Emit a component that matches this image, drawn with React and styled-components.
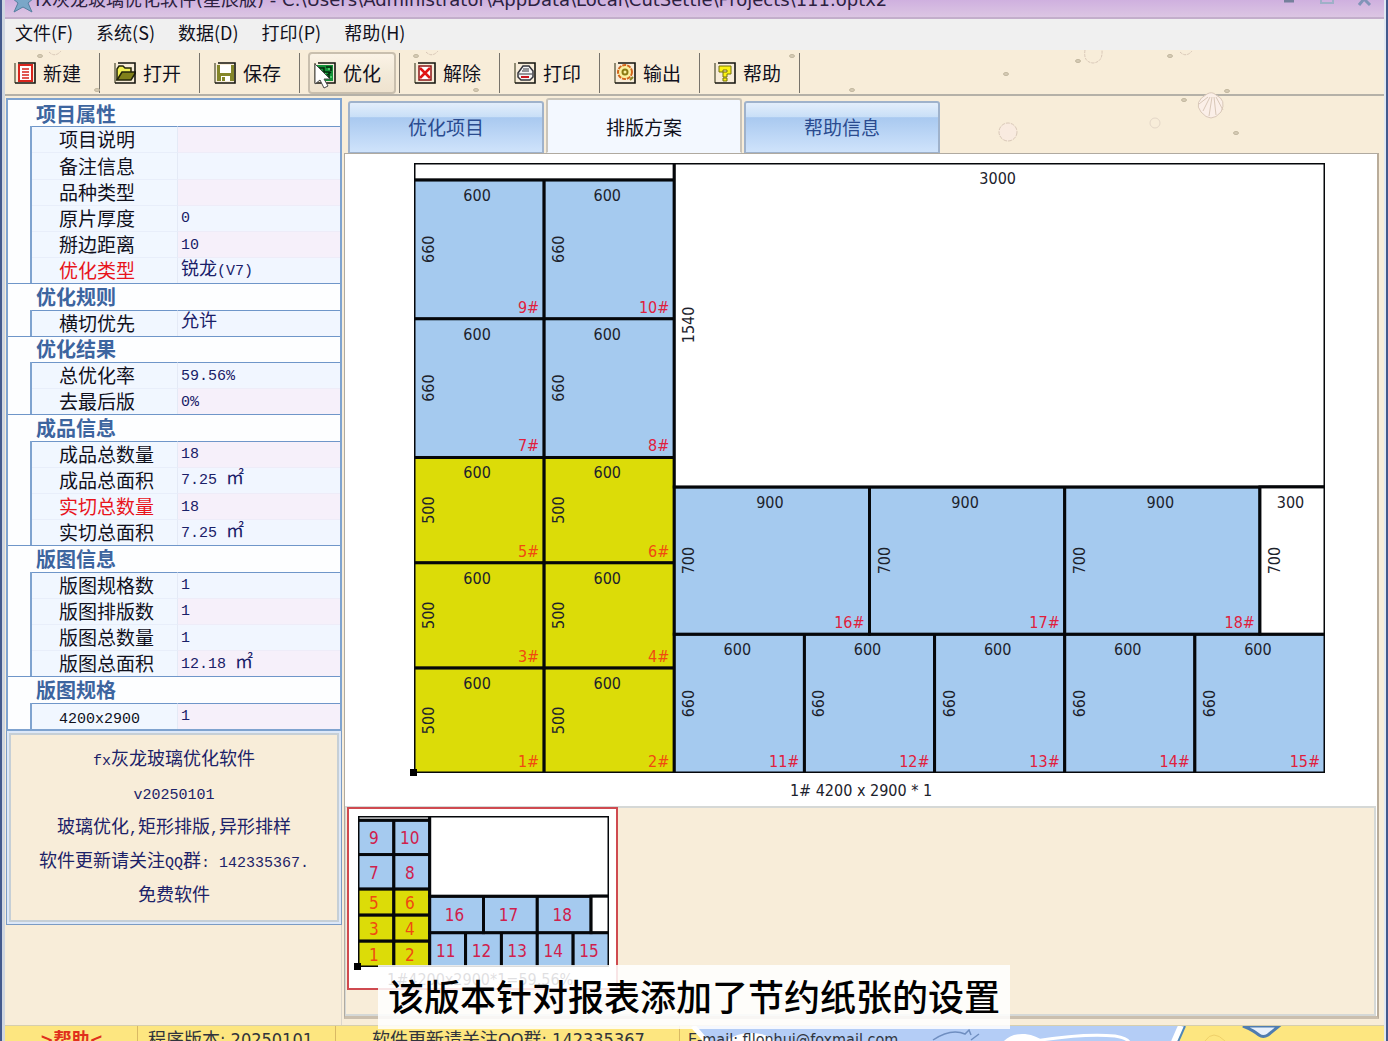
import React, { useState } from "react"
import styled, { createGlobalStyle, css } from "styled-components"

const tahoma = `"DejaVu Sans Condensed", "DejaVu Sans", "Noto Sans CJK SC", sans-serif`
const verdana = `"DejaVu Sans", "Noto Sans CJK SC", sans-serif`
const mono = `"Liberation Mono", "Noto Sans CJK SC", monospace`

const GlobalStyle = createGlobalStyle`
	* { box-sizing: border-box; }

	body {
		margin: 0;
		overflow: hidden;
		font-family: "Noto Sans CJK SC", sans-serif;
		font-size: 18px;
		color: #10101c;
	}

	button { font: inherit; color: inherit; }
`

const Window = styled.div`
	position: relative;
	display: flex;
	flex-direction: column;
	height: 100vh;
	background: #f8edd9;
	border-left: 2px solid #43598c;
	border-right: 2px solid #43598c;
`

const Frame = styled.div`
	display: flex;
	flex-direction: column;
	flex: 1;
	min-height: 0;
	border-left: 3px solid #cfd6e0;
	border-right: 2px solid #dfe7f2;
`

const TitleBar = styled.header`
	display: flex;
	align-items: flex-end;
	flex: none;
	height: 19px;
	padding: 0 8px 0 6px;
	overflow: hidden;
	background: linear-gradient(#cfb0df, #dcc6e3);
	border-bottom: 2px solid #c3aecb;

	svg { flex: none; }
`

const Title = styled.h1`
	flex: 1;
	margin: 0 0 7px;
	font-family: ${verdana};
	font-size: 18px;
	font-weight: 400;
	line-height: 20px;
	white-space: nowrap;
	color: #2c2140;
`

const MenuBar = styled.nav`
	display: flex;
	align-items: flex-start;
	flex: none;
	gap: 23px;
	height: 31px;
	padding-left: 10px;
	background: #f0f0f0;

	button {
		padding: 0;
		border: 0;
		background: none;
		line-height: 26px;
	}
`

const ToolBar = styled.div`
	display: flex;
	flex: none;
	height: 46px;
	border-bottom: 2px solid #b5b1a8;
`

const Tool = styled.div`
	display: flex;
	width: 100px;
	margin: 3px 0 1px;
	border-right: 1px solid #77736b;

	&:first-child { width: 95px; }
	&:first-child button { margin-left: 3px; }
`

const ToolButton = styled.button`
	display: flex;
	align-items: center;
	flex: 1;
	gap: 7px;
	margin: -1px 3px -1px 8px;
	padding: 0 0 0 5px;
	border: 1px solid transparent;
	border-radius: 4px;
	background: none;
	font-size: 19px;
	line-height: 24px;
	white-space: nowrap;

	${({ $hot }) => $hot && css`
		border: 2px solid #c9bfae;
		padding-left: 4px;
		background: linear-gradient(#fbf3e6, #f3ead9 50%, #efe3cf);
	`}
`

const Body = styled.div`
	display: flex;
	flex: 1;
	min-height: 0;
	padding-top: 2px;
`

const Sidebar = styled.aside`
	flex: none;
	width: 337px;
	border-right: 1px solid #dcd6cb;
`

const Properties = styled.table`
	width: 336px;
	height: 633px;
	margin-left: 1px;
	border: 2px solid #7fa3cf;
	border-spacing: 0;
	background: #fdfeff;
	table-layout: fixed;

	th, td {
		height: 26px;
		padding: 0 0 1px;
		line-height: 22px;
		text-align: left;
		font-weight: 400;
		white-space: nowrap;
	}

	tr:nth-child(even) td:last-child { background: #f6f0fa; }
`

const GroupHead = styled.th`
	&& {
		padding: 0 0 0 28px;
		font-size: 20px;
		font-weight: 700;
		color: #3d659f;
		border-top: 1px solid ${({ $first }) => ($first ? "transparent" : "#6f96c9")};
	}
`

const Gutter = styled.td`
	width: 24px;
	border-right: 2px solid #7fa3cf;
`

const Label = styled.th`
	width: 146px;
	background: #f1f7ff;
	border-right: 1px solid #e4eaf6;
	border-top: 1px solid ${({ $top }) => ($top ? "#6f96c9" : "#e8eefa")};
	font-size: 19px;
	color: ${({ $alert }) => ($alert ? "#e8141c" : "#10101c")};

	&& { padding-left: 27px; }
`

const Value = styled.td`
	background: #f1f6ff;
	border-top: 1px solid ${({ $top }) => ($top ? "#6f96c9" : "#eeecf8")};
	font-family: ${mono};
	font-size: 15px;
	color: #1a2068;

	&& { padding: 2px 0 0 3px; }
`

const Wide = styled.span`
	font-size: 18px;
	line-height: 1;
`

const Small = styled.span`
	font-family: ${mono};
	font-size: 15px;
	line-height: 1;
`

const About = styled.section`
	width: 336px;
	margin-left: 1px;
	padding: 2px;
	border: 1px solid #7b9bc4;
	border-top: 0;
	background: #dde8f8;

	div {
		padding: 5px 0 10px;
		border: 2px solid #c6cfd6;
		background: #f8edd9;
		text-align: center;
		color: #1c2268;
	}

	p {
		margin: 0;
		line-height: 34px;
		white-space: nowrap;
	}
`

const Main = styled.main`
	display: flex;
	flex-direction: column;
	flex: 1;
	min-width: 0;
	padding: 0 5px 0 2px;
`

const Tabs = styled.div`
	display: flex;
	align-items: flex-end;
	flex: none;
	gap: 2px;
	height: 55px;
	padding-left: 4px;
`

const Tab = styled.button`
	width: 196px;
	height: 52px;
	padding: 0 0 2px;
	border: 2px solid #9fb2cb;
	border-bottom-width: 1px;
	border-radius: 3px 3px 0 0;
	background: linear-gradient(#e3eefb, #c9dff7 28%, #a9c9f0 30%, #cfe3fb);
	font-size: 19px;
	color: #2a4b8f;

	${({ $active }) => $active && css`
		height: 55px;
		padding: 0;
		border-color: #c9c4ba;
		border-bottom-color: #f3f8ff;
		background: #f3f8ff;
		color: #10101c;
	`}
`

const Panel = styled.section`
	display: flex;
	flex-direction: column;
	flex: 1;
	min-height: 0;
	margin-bottom: 6px;
	border: 1px solid #b0aaa0;
	border-right: 2px solid #b9ac9a;
	border-bottom: 3px solid #cbbfae;
	background: #fff;
`

const Plan = styled.div`
	flex: 1;
	min-height: 0;

	svg {
		display: block;
		width: 100%;
		height: 100%;
	}
`

const Tray = styled.div`
	flex: none;
	height: 210px;
	margin-right: 1px;
	border: 2px solid #d5d8d6;
	border-left-width: 1px;
	background: #f8edd9;
`

const Thumb = styled.button`
	display: block;
	width: 271px;
	height: 183px;
	margin: -1px 0 0 1px;
	padding: 0;
	border: 2px solid #cf4a50;
	background: #fff;
`

const StatusBar = styled.footer`
	position: relative;
	display: flex;
	flex: none;
	height: 16px;
	overflow: hidden;
	border-top: 1px solid #d6cfae;
	background: #fde680;
	font-family: ${tahoma};

	svg {
		position: absolute;
		left: 680px;
		top: 0;
	}
`

const Cell = styled.div`
	position: relative;
	flex: none;
	width: ${({ $w }) => $w}px;
	padding-left: ${({ $pad }) => $pad || 10}px;
	border-right: 1px solid #d9b964;
	font-size: ${({ $latin }) => ($latin ? 16 : 18)}px;
	line-height: 28px;
	white-space: nowrap;
	color: #30343c;

	&:last-of-type { border: 0; }

	a {
		color: #e0301c;
		font-weight: 700;
		text-decoration: none;
	}
`

const Subtitle = styled.div`
	position: absolute;
	left: 0;
	right: 0;
	bottom: 12px;
	display: flex;
	justify-content: center;
	pointer-events: none;

	span {
		padding: 0 10px 4px;
		background: rgba(255, 255, 255, 0.86);
		color: #000;
		font-size: 36px;
		font-weight: 500;
		line-height: 60px;
		white-space: nowrap;
	}
`

const Pointer = styled.svg`
	position: absolute;
	left: 309px;
	top: 63px;
`

const Shells = styled.svg`
	position: absolute;
	left: 0;
	top: 50px;
	pointer-events: none;
`

const groups = [
	["项目属性", [["项目说明", ""], ["备注信息", ""], ["品种类型", ""], ["原片厚度", "0"], ["掰边距离", "10"], ["优化类型", <><Wide>锐龙</Wide>(V7)</>, true]]],
	["优化规则", [["横切优先", <Wide>允许</Wide>]]],
	["优化结果", [["总优化率", "59.56%"], ["去最后版", "0%"]]],
	["成品信息", [["成品总数量", "18"], ["成品总面积", <>7.25 <Wide>㎡</Wide></>], ["实切总数量", "18", true], ["实切总面积", <>7.25 <Wide>㎡</Wide></>]]],
	["版图信息", [["版图规格数", "1"], ["版图排版数", "1"], ["版图总数量", "1"], ["版图总面积", <>12.18 <Wide>㎡</Wide></>]]],
	["版图规格", [[<Small>4200x2900</Small>, "1"]]],
]

// sheet and pieces in mm, origin at the bottom left corner
const SHEET = { w: 4200, h: 2900 }

const pieces = [
	[1, 0, 0, 600, 500], [2, 600, 0, 600, 500],
	[3, 0, 500, 600, 500], [4, 600, 500, 600, 500],
	[5, 0, 1000, 600, 500], [6, 600, 1000, 600, 500],
	[7, 0, 1500, 600, 660], [8, 600, 1500, 600, 660],
	[9, 0, 2160, 600, 660], [10, 600, 2160, 600, 660],
	[11, 1200, 0, 600, 660], [12, 1800, 0, 600, 660], [13, 2400, 0, 600, 660],
	[14, 3000, 0, 600, 660], [15, 3600, 0, 600, 660],
	[16, 1200, 660, 900, 700], [17, 2100, 660, 900, 700], [18, 3000, 660, 900, 700],
	[null, 0, 2820, 1200, 80], [null, 1200, 1360, 3000, 1540], [null, 3900, 660, 300, 700],
]

const Sheet = ({ id, x, y, width, height, detailed }) => {
	const sx = width / SHEET.w,
		sy = height / SHEET.h

	return (
		<g transform={`translate(${x} ${y})`} fontFamily={tahoma} fontSize={detailed ? 16 : 17} fill="#1c222c">
			<clipPath id={id}><rect width={width} height={height} /></clipPath>
			<g clipPath={`url(#${id})`}>
				{pieces.map(([n, px, py, w, h]) => {
					const left = px * sx,
						top = height - (py + h) * sy,
						pw = w * sx,
						ph = h * sy,
						fill = !n ? "#fff" : h === 500 ? "#dcdc08" : "#a5caef"

					return (
						<g key={`${px}-${py}`}>
							<rect x={left} y={top} width={pw} height={ph} fill={fill} stroke="#05070a" strokeWidth="3" />
							{detailed && ph > 30 && <>
								<text x={left + pw / 2 - 2} y={top + 21} textAnchor="middle">{w}</text>
								<text transform={`translate(${left + 20} ${top + ph / 2}) rotate(-90)`} textAnchor="middle">{h}</text>
								{n && <text x={left + pw - 5} y={top + ph - 6} textAnchor="end" fill={h === 500 ? "#f04a10" : "#e0203c"}>{n}#</text>}
							</>}
							{!detailed && n && <text x={left + pw / 2 - 2} y={top + ph / 2 + 7} textAnchor="middle" fill={h === 500 ? "#f04a10" : "#d0204c"}>{n}</text>}
						</g>
					)
				})}
			</g>
			<rect x={-4} y={height - 4} width={7} height={7} fill="#000" />
		</g>
	)
}

const art = {
	new: <>
		<rect x="5" y="3" width="13" height="16" fill="#fff" stroke="#d8251c" strokeWidth="2" />
		<path d="M8 7h7M8 10h7M8 13h7M8 16h7" stroke="#d8251c" strokeWidth="1.5" />
	</>,
	open: <>
		<path d="M3 18V7l2-3h4l2 2h6v4" fill="#f2f056" stroke="#23240a" strokeWidth="1.5" />
		<path d="M3 18l5-8h14l-5 8z" fill="#80801a" stroke="#23240a" strokeWidth="1.5" />
	</>,
	save: <>
		<path d="M3 3h17v16H3z" fill="#84862a" />
		<path d="M6 3h11v8H6zM7 14h9v5H7z" fill="#fff" />
		<path d="M8 15h3v4H8z" fill="#84862a" />
	</>,
	optimize: <>
		<rect x="2" y="3" width="17" height="16" fill="#14923a" />
		<path d="M4 6h6v4h5v6M12 5h5v4M6 14h4v3M13 13l4-3" stroke="#04280c" strokeWidth="1.5" fill="none" />
		<path d="M5 8h2M14 7h2M9 12h3M16 15h2" stroke="#58e078" strokeWidth="1.5" />
	</>,
	remove: <>
		<rect x="5" y="4" width="12" height="14" fill="#fff" stroke="#8b1616" strokeWidth="1.5" />
		<path d="M6 6l10 10M16 6L6 16" stroke="#e01414" strokeWidth="2.5" />
	</>,
	print: <>
		<path d="M4 11l5-7h6l4 5v6l-3 3H7l-3-3z" fill="#f6f6f6" stroke="#33343c" strokeWidth="1.5" />
		<path d="M9 7h6M8 9h7M5 12h13" stroke="#33343c" strokeWidth="1.2" />
		<path d="M7 15h8" stroke="#c81820" strokeWidth="2" />
	</>,
	output: <>
		<circle cx="11" cy="10" r="7" fill="#faf0a0" stroke="#d2661c" strokeWidth="2" strokeDasharray="4 1" />
		<circle cx="11" cy="10" r="2.5" fill="none" stroke="#8a7a14" strokeWidth="2" />
		<path d="M16 18l3-3" stroke="#8a8420" strokeWidth="2" />
	</>,
	help: <>
		<path d="M5 4h12v8h-4v3H9v-5h4V8H9v2H5zM9 16h4v3H9z" fill="#fbf312" stroke="#77720c" />
	</>,
}

const Icon = ({ name }) => (
	<svg width="22" height="22" viewBox="0 0 22 22" aria-hidden="true">
		<path d="M1 1v20" stroke="#6e6a50" strokeWidth="1.5" />
		{art[name]}
		<path d="M4 1h17v20H1" fill="none" stroke="#14140f" strokeWidth="1.6" />
	</svg>
)

const tools = [["new", "新建"], ["open", "打开"], ["save", "保存"], ["optimize", "优化"], ["remove", "解除"], ["print", "打印"], ["output", "输出"], ["help", "帮助"]]
const menus = ["文件(F)", "系统(S)", "数据(D)", "打印(P)", "帮助(H)"]
const tabs = ["优化项目", "排版方案", "帮助信息"]

const pebbles = [[38, 6], [95, 40], [414, 6], [474, 40], [790, 6], [850, 40], [1004, 24], [1076, 11], [1168, 6], [1225, 41], [1182, 50], [1234, 83]]

const SandShells = () => (
	<Shells width="1380" height="104" viewBox="0 0 1380 104" fill="none" stroke="#d9c8b8" aria-hidden="true">
		{pebbles.map(([x, y]) => <ellipse key={`${x}-${y}`} cx={x} cy={y} rx="2.5" ry="1.5" fill="#d6ccb6" stroke="#c2b79f" />)}
		<path d="M1083 0q-2 12 8 13q10-1 9-13" strokeDasharray="3 1" />
		<circle cx="1153" cy="73" r="5" stroke="#e4d7c8" />
		<circle cx="1006" cy="82" r="9" fill="#f9ebe0" strokeDasharray="4 1" />
		<path d="M47 2q6 6 12-1M424 2q6 6 12-1M1178 2q6 6 12-1" strokeDasharray="3 1" />
		<path d="M1205 44q-14 8-6 18q10 12 20 0q6-12-5-17q-4-4-9-1zM1208 47l-7 14M1210 47l-3 19M1212 47l2 18M1214 47l7 13M1206 47l-9 7" fill="#fbefe8" />
	</Shells>
)

const App = () => {
	const [tab, setTab] = useState(1)

	return (
		<Window>
			<GlobalStyle />
			<Frame>
				<TitleBar>
					<svg width="24" height="24" viewBox="0 0 24 24"><path d="M12 0l3 9 8 1-6 5 4 9-9-5-9 5 4-9-6-5 8-1z" fill="#7aa7c8" stroke="#557f9f" transform="translate(0 -5)" /></svg>
					<Title>fx灰龙玻璃优化软件(星辰版) - C:\Users\Administrator\AppData\Local\CutSettle\Projects\111.optx2</Title>
					<svg width="96" height="17" viewBox="0 0 96 17" fill="none">
						<path d="M4 1h10" stroke="#75809c" strokeWidth="3" />
						<path d="M41 0v3h12V0" stroke="#9fb0c8" strokeWidth="2" />
						<path d="M79 5l5-6 6 6" stroke="#8194b8" strokeWidth="3" />
					</svg>
				</TitleBar>
				<MenuBar>
					{menus.map(m => <button key={m} type="button">{m}</button>)}
				</MenuBar>
				<ToolBar>
					{tools.map(([icon, label]) => (
						<Tool key={icon}>
							<ToolButton type="button" $hot={icon === "optimize"}>
								<Icon name={icon} />{label}
							</ToolButton>
						</Tool>
					))}
				</ToolBar>
				<Body>
					<Sidebar>
						<Properties>
							<colgroup>
								<col width="24" />
								<col width="146" />
								<col />
							</colgroup>
							<tbody>
								{groups.map(([head, rows], g) => (
									<React.Fragment key={head}>
										<tr><GroupHead colSpan={3} scope="colgroup" $first={g === 0}>{head}</GroupHead></tr>
										{rows.map(([label, value, alert], i) => (
											<tr key={i}>
												<Gutter />
												<Label scope="row" $top={i === 0} $alert={alert}>{label}</Label>
												<Value $top={i === 0}>{value}</Value>
											</tr>
										))}
									</React.Fragment>
								))}
							</tbody>
						</Properties>
						<About>
							<div>
								<p><Small>fx</Small>灰龙玻璃优化软件</p>
								<p><Small>v20250101</Small></p>
								<p>玻璃优化<Small>,</Small>矩形排版<Small>,</Small>异形排样</p>
								<p>软件更新请关注<Small>QQ</Small>群<Small>: 142335367.</Small></p>
								<p>免费软件</p>
							</div>
						</About>
					</Sidebar>
					<Main>
						<Tabs role="tablist">
							{tabs.map((t, i) => (
								<Tab key={t} type="button" role="tab" aria-selected={tab === i} $active={tab === i} onClick={() => setTab(i)}>{t}</Tab>
							))}
						</Tabs>
						<Panel>
							<Plan>
								<svg viewBox="0 0 1030 652">
									<Sheet id="plan" x={68} y={9} width={911} height={610} detailed />
									<text x={515} y={642} textAnchor="middle" fontFamily={tahoma} fontSize="16" fill="#1c222c">1# 4200 x 2900 * 1</text>
								</svg>
							</Plan>
							<Tray>
								<Thumb type="button" aria-label="1#">
									<svg width="267" height="179" viewBox="0 0 267 179">
										<Sheet id="thumb" x={9} y={7} width={251} height={151} />
										<text x={38} y={176} fontFamily={tahoma} fontSize="16" fill="#1c222c">1#4200x2900*1=59.56%</text>
									</svg>
								</Thumb>
							</Tray>
						</Panel>
					</Main>
				</Body>
				<StatusBar>
					<svg width="600" height="16" viewBox="0 0 600 16" aria-hidden="true">
						<path d="M6 0h494l-8 16H20z" fill="#b4cdf6" />
						<path d="M40 16q14-12 36-8q10 2 14 8M318 16q8-9 22-8q14 2 18 8" fill="#fff" />
						<path d="M350 15q50-8 80-5q12 2 14 6" fill="none" stroke="#fff" strokeWidth="3" />
						<path d="M496 0l-7 16" stroke="#fff" strokeWidth="6" />
						<path d="M500 0l-7 16" stroke="#4f86b8" strokeWidth="2" />
						<path d="M8 0l14 16" stroke="#fff" strokeWidth="5" />
						<path d="M248 14q18-12 32-6l4-4 2 5M286 14l8-6" fill="none" stroke="#6f8ec0" strokeWidth="1.5" />
						<path d="M558 0q10 4 16 9q4 3 9 0l11-9z" fill="#e8f0fc" stroke="#4f7cb0" strokeWidth="3" />
						<path d="M520 15q8-12 20 0" fill="none" stroke="#efd069" />
					</svg>
					<Cell $w={133} $pad={35}><a href="#help">&gt;帮助&lt;</a></Cell>
					<Cell $w={198}>程序版本: 20250101</Cell>
					<Cell $w={344} $pad={36}>软件更新请关注QQ群: 142335367</Cell>
					<Cell $w={300} $pad={8} $latin>E-mail: fllonhui@foxmail.com</Cell>
				</StatusBar>
			</Frame>
			<SandShells />
			<Pointer width="22" height="30" viewBox="0 0 22 30">
				<path d="M4 1v20l5-4 4 8 4-2-4-7h6z" fill="#fff" stroke="#4a4a4a" />
			</Pointer>
			<Subtitle><span>该版本针对报表添加了节约纸张的设置</span></Subtitle>
		</Window>
	)
}

export default App
